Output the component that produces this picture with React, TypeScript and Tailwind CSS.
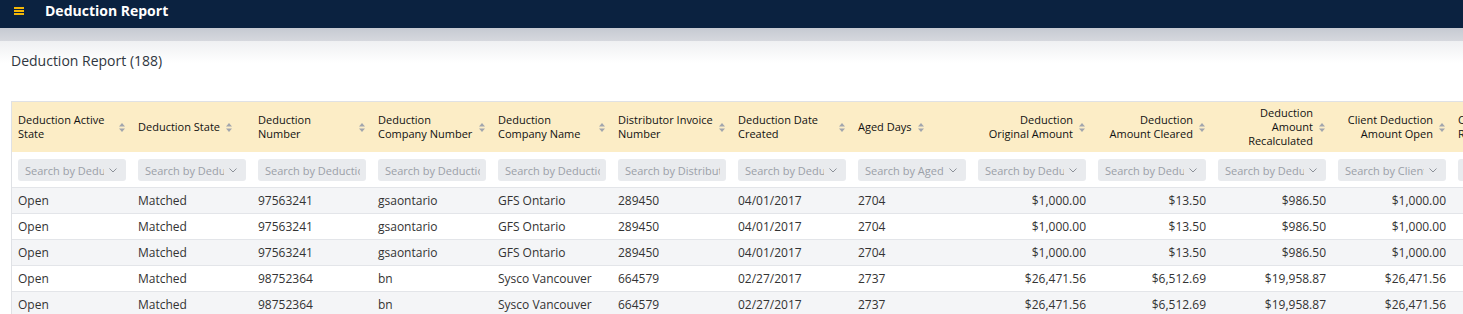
import React from "react";

type Col = {
  label: string[];
  ph: string;
  dd?: boolean;
  right?: boolean;
};

const cols: Col[] = [
  { label: ["Deduction Active", "State"], ph: "Search by Deduction Active State", dd: true },
  { label: ["Deduction State"], ph: "Search by Deduction State", dd: true },
  { label: ["Deduction", "Number"], ph: "Search by Deduction Number" },
  { label: ["Deduction", "Company Number"], ph: "Search by Deduction Company Number" },
  { label: ["Deduction", "Company Name"], ph: "Search by Deduction Company Name" },
  { label: ["Distributor Invoice", "Number"], ph: "Search by Distributor Invoice Number" },
  { label: ["Deduction Date", "Created"], ph: "Search by Deduction Date Created", dd: true },
  { label: ["Aged Days"], ph: "Search by Aged Days", dd: true },
  { label: ["Deduction", "Original Amount"], ph: "Search by Deduction Original Amount", dd: true, right: true },
  { label: ["Deduction", "Amount Cleared"], ph: "Search by Deduction Amount Cleared", dd: true, right: true },
  { label: ["Deduction", "Amount", "Recalculated"], ph: "Search by Deduction Amount Recalculated", dd: true, right: true },
  { label: ["Client Deduction", "Amount Open"], ph: "Search by Client Deduction Amount Open", dd: true, right: true },
  { label: ["Client Deduction", "Reason Code"], ph: "Search by Client Deduction Reason Code", dd: true, right: true },
];

const first = ["Open", "Matched", "97563241", "gsaontario", "GFS Ontario", "289450", "04/01/2017", "2704", "$1,000.00", "$13.50", "$986.50", "$1,000.00", "$0.00"];
const second = ["Open", "Matched", "98752364", "bn", "Sysco Vancouver", "664579", "02/27/2017", "2737", "$26,471.56", "$6,512.69", "$19,958.87", "$26,471.56", "$0.00"];
const rows = [first, first, first, second, second];

function SortIcon() {
  return (
    <svg width="6" height="9" viewBox="0 0 6 9" className="shrink-0 fill-[#a2a6ad]">
      <path d="M3 0L6 3.5H0Z" />
      <path d="M3 9L0 5.5H6Z" />
    </svg>
  );
}

function Chevron() {
  return (
    <svg width="8" height="5" viewBox="0 0 8 5" className="pointer-events-none absolute right-[9px] top-[9px]">
      <path d="M0.5 0.5L4 4L7.5 0.5" fill="none" stroke="#8d929a" strokeWidth="1" />
    </svg>
  );
}

function HeaderCell({ col, last }: { col: Col; last?: boolean }) {
  const multi = col.label.length > 1;
  const right = col.right && !last;
  return (
    <div
      className={`flex h-[50px] w-[120px] shrink-0 items-center gap-[6px] pl-[6px] pr-[7px] ${right ? "justify-end text-right" : ""}`}
    >
      <span className={`text-[11px] leading-[14px] font-medium text-[#111] ${multi && !right ? "flex-1" : ""}`}>
        {col.label.map((l, i) => (
          <React.Fragment key={i}>
            {i > 0 && <br />}
            {l}
          </React.Fragment>
        ))}
      </span>
      <SortIcon />
    </div>
  );
}

function FilterCell({ col }: { col: Col }) {
  return (
    <div className="w-[120px] shrink-0 px-[6px] pt-[7px]">
      <div className="relative">
        <input
          readOnly
          placeholder={col.ph}
          className={`block h-[22px] w-full rounded-[3px] bg-[#e9ebee] pl-[7px] text-[11px] text-[#333] outline-none placeholder:text-[#9ba0a8] ${col.dd ? "pr-[22px]" : "pr-[6px]"}`}
        />
        {col.dd && <Chevron />}
      </div>
    </div>
  );
}

export default function App() {
  return (
    <div className="h-[314px] w-full overflow-hidden bg-white font-['Open_Sans',sans-serif]">
      <header className="flex h-[28px] items-center gap-[21px] bg-[#0b2240] pb-[7px] pl-[14px]">
        <div className="flex w-[10px] flex-col gap-[1px]">
          <span className="h-[2px] bg-[#f3b707]" />
          <span className="h-[2px] bg-[#f3b707]" />
          <span className="h-[2px] bg-[#f3b707]" />
        </div>
        <h1 className="text-[14px] leading-[19px] font-bold text-white">Deduction Report</h1>
      </header>
      <div className="h-[13px] bg-gradient-to-b from-[#c6cad2] to-[#d6d8de]" />
      <main className="bg-[linear-gradient(180deg,#eff0f2_0px,#ffffff_22px)] pl-[11px] pt-[10px]">
        <h2 className="text-[14px] leading-[19px] text-[#2f3640]">Deduction Report (188)</h2>
        <div className="mt-[31px] w-max border-l border-t border-[#dfe1e5]">
          <div className="flex bg-[#fcedc6]">
            {cols.map((c, i) => (
              <HeaderCell key={i} col={c} last={i === cols.length - 1} />
            ))}
          </div>
          <div className="flex h-[36px] border-b border-[#e3e5e9] bg-white">
            {cols.map((c, i) => (
              <FilterCell key={i} col={c} />
            ))}
          </div>
          {rows.map((r, ri) => (
            <div
              key={ri}
              className={`flex h-[26px] items-center border-b border-[#e3e5e9] text-[12px] text-[#333] ${ri % 2 === 0 ? "bg-[#f4f5f7]" : "bg-white"}`}
            >
              {r.map((v, ci) => (
                <div
                  key={ci}
                  className={`w-[120px] shrink-0 truncate px-[6px] ${cols[ci].right ? "text-right" : ""}`}
                >
                  {v}
                </div>
              ))}
            </div>
          ))}
        </div>
      </main>
    </div>
  );
}
